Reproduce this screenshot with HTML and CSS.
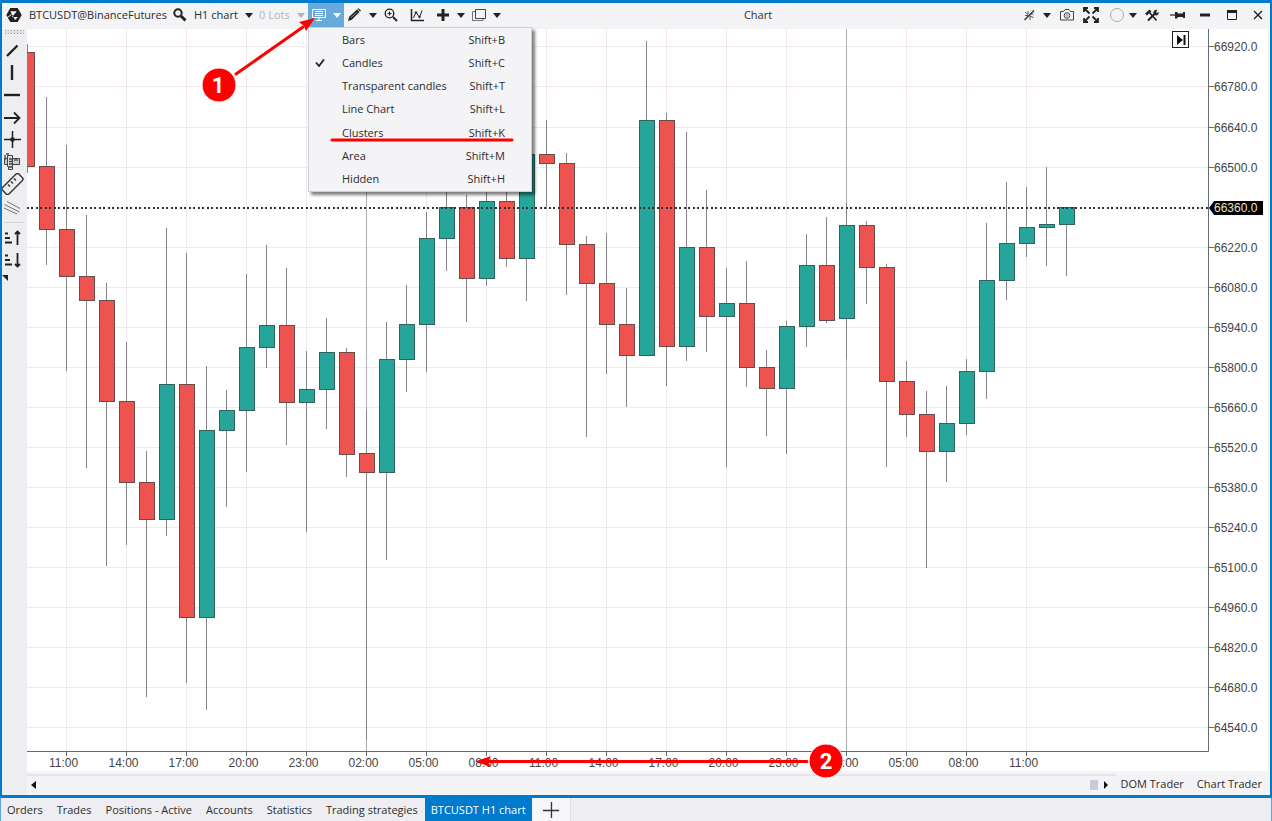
FILE: index.html
```html
<!DOCTYPE html>
<html lang="en">
<head>
<meta charset="utf-8">
<title>BTCUSDT H1 chart</title>
<link rel="stylesheet" href="styles.css">
</head>
<body>
<div class="app">
  <main class="window">
    <header class="toolbar">
      <svg class="logo" viewBox="0 0 16 16" width="16" height="16"><path d="M4.300 1h7.400L15.700 8l-4 7H4.300L.3 8z" fill="#222"/><path d="M4.500 4.500h6L5.800 10H12L9 13z" fill="#f4f4f6"/><path d="M4.500 4.500h6L7 8.500z" fill="#f4f4f6"/><path d="M0 11.500L5.500 7.500" stroke="#f4f4f6" stroke-width="1"/></svg>
      <span class="symbol">BTCUSDT@BinanceFutures</span>
      <button class="tool search" aria-label="Find instrument"><svg viewBox="0 0 14 14" width="14" height="14"><circle cx="5" cy="5" r="3.700" fill="none" stroke="#222" stroke-width="2"/><path d="M8 8l4.500 4.500" stroke="#222" stroke-width="3"/></svg></button>
      <button class="tool interval">H1 chart <i class="caret"></i></button>
      <button class="tool lots" disabled>0 Lots <i class="caret"></i></button>
      <button class="tool pair view" aria-label="Chart view" aria-expanded="true"><svg viewBox="0 0 14 14" width="14" height="14" fill="none" stroke="#fff"><path d="M.5 1.500h13v8H.5zM3 3.500h8M3 5.500h8M3 7.500h8M7 10v2M4 12.500h6"/></svg><i class="caret"></i></button>
      <button class="tool pair" aria-label="Draw"><svg viewBox="0 0 14 14" width="14" height="14"><path d="M0 13l1.200-4.200L9 1.500 11.500 4l-7.700 7.700z" fill="#222"/><path d="M9.500 1l1-.8 2.500 2.300-.9 1z" fill="#222"/><path d="M3 9.500l5.500-5" stroke="#bbb" stroke-width=".8"/></svg><i class="caret"></i></button>
      <button class="tool single" aria-label="Zoom"><svg viewBox="0 0 14 14" width="14" height="14" fill="none" stroke="#222"><circle cx="5.500" cy="5.500" r="4.300" stroke-width="1.300"/><path d="M3.500 5.500h4M5.500 3.500v4" stroke-width="1.200"/><path d="M9 9l4 4" stroke-width="2"/></svg></button>
      <button class="tool single" aria-label="Indicators"><svg viewBox="0 0 14 14" width="14" height="14" fill="none" stroke="#222"><path d="M1.500 1v11.500H14" stroke-width="1.500"/><path d="M3.500 10l2.500-6 3.500 5.500L12 2.500"/><circle cx="6" cy="4.500" r=".8"/><circle cx="9.500" cy="9" r=".8"/></svg></button>
      <button class="tool pair" aria-label="Add"><svg viewBox="0 0 14 14" width="14" height="14"><path d="M7 1v12M1 7h12" stroke="#222" stroke-width="3"/></svg><i class="caret"></i></button>
      <button class="tool pair" aria-label="Windows"><svg viewBox="0 0 14 14" width="14" height="14" fill="none" stroke="#444"><path d="M3.500 1.500h10v9h-10z"/><path d="M3 3.500H.5v9H11V11" stroke="#777"/></svg><i class="caret"></i></button>
      <h1 class="title">Chart</h1>
      <button class="tool pair" aria-label="Link"><svg viewBox="0 0 14 14" width="14" height="14" fill="none" stroke="#333"><path d="M2.500 12L12 2.500" stroke-width="1.500"/><path d="M3 4l3 2.500V3M11.500 9.500L8 8v4M3 7.500h3M8 6h3.500" stroke-width=".8"/></svg><i class="caret"></i></button>
      <button class="tool shot" aria-label="Screenshot"><svg viewBox="0 0 14 14" width="14" height="14" fill="none" stroke="#444"><path d="M.5 3.500h3L5 1.500h4l1.500 2h3v8.500H.5z"/><circle cx="7" cy="7.500" r="2.800"/><circle cx="7" cy="7.500" r="1" stroke="#999"/></svg></button>
      <button class="tool full" aria-label="Full screen"><svg viewBox="0 0 16 16" width="16" height="16" fill="none" stroke="#222" stroke-width="1.800"><path d="M1 5V1h4M11 1h4v4M15 11v4h-4M5 15H1v-4M1 1l5.500 5.500M15 1L9.500 6.500M15 15L9.500 9.500M1 15l5.500-5.500"/></svg></button>
      <button class="tool pair color" aria-label="Colour"><svg viewBox="0 0 14 14" width="14" height="14"><circle cx="7" cy="7" r="6.500" fill="none" stroke="#aaa"/></svg><i class="caret"></i></button>
      <button class="tool setup" aria-label="Settings"><svg viewBox="0 0 14 14" width="14" height="14" fill="none" stroke="#222"><path d="M3 12.500l7-7" stroke-width="2"/><path d="M8.500 4.500A3 3 0 0 1 12 2L10.800 4.200l1 1L13.700 4.500A3 3 0 0 1 10 7z" fill="#222" stroke-width=".5"/><path d="M1 6.500l4.500-4" stroke-width="2.600"/><path d="M4.500 4.500l7 8" stroke-width="1.600"/></svg></button>
      <button class="tool wide" aria-label="Pin"><svg viewBox="0 0 16 14" width="16" height="14"><path d="M0 7h8" stroke="#222" stroke-width="1.200"/><path d="M5 4h2l1 1.500h5V4h2v6h-2V9H8l-1 1.500H5z" fill="#222"/></svg></button>
      <button class="tool wide" aria-label="Minimize"><svg viewBox="0 0 14 14" width="14" height="14"><path d="M2 7h10" stroke="#222" stroke-width="3"/></svg></button>
      <button class="tool wide" aria-label="Maximize"><svg viewBox="0 0 14 14" width="14" height="14"><path d="M2.500 3v8.500h9V3" fill="none" stroke="#222"/><path d="M2 3.500h10" stroke="#222" stroke-width="3"/></svg></button>
      <button class="tool close" aria-label="Close"><svg viewBox="0 0 14 14" width="14" height="14"><path d="M3 3l8 8M11 3l-8 8" stroke="#222" stroke-width="1.400"/></svg></button>
    </header>

    <nav class="drawing" aria-label="Drawing tools">
      <svg class="grip" viewBox="0 0 19 5" width="19" height="5" fill="none" stroke="#999" stroke-dasharray="1 2"><path d="M0 .5h19M0 3.500h19"/><path d="M1.500 2h17"/></svg>
      <button class="draw" aria-label="Line"><svg viewBox="0 0 22 22"><path d="M5 16L15.500 5.500" stroke="#222" stroke-width="2.400"/></svg></button>
      <button class="draw" aria-label="Vertical line"><svg viewBox="0 0 22 22"><path d="M10 3v15" stroke="#222" stroke-width="2.400"/></svg></button>
      <button class="draw" aria-label="Horizontal line"><svg viewBox="0 0 22 22"><path d="M2 11h16" stroke="#222" stroke-width="2.400"/></svg></button>
      <button class="draw" aria-label="Arrow"><svg viewBox="0 0 22 22" fill="none" stroke="#222" stroke-width="1.800"><path d="M2 12h15M12 6.500l5.500 5.500-5.500 5.500"/></svg></button>
      <button class="draw" aria-label="Cross"><svg viewBox="0 0 22 22"><path d="M2 11.500h17M10.500 3v17" stroke="#222" stroke-width="1.500"/><circle cx="10.500" cy="11.500" r="2.300" fill="#222"/></svg></button>
      <button class="draw" aria-label="Caliper"><svg viewBox="0 0 22 22" fill="none" stroke="#444"><path d="M2.500 8.500h15v6h-15z" fill="#ccc"/><path d="M5.500 5.500h5v14h-4v-3h-1z" fill="#ddd"/><path d="M3 5v5M4 4h3M7 9h3M7 11.500h3M7 14h3M7 17h3M13 9v2M15 9v2" stroke-width="1.300"/></svg></button>
      <button class="draw tall" aria-label="Ruler"><svg viewBox="0 0 22 22" fill="none" stroke="#333" stroke-width="1.400"><rect x="-1" y="6.500" width="23" height="9" rx="2" transform="rotate(-45 10.500 11)"/><path d="M6 11.500l2 2M9 8.500l2 2M12 5.500l2 2"/></svg></button>
      <button class="draw tall" aria-label="Channel"><svg viewBox="0 0 22 22" stroke="#777"><path d="M2 11l13 6M2.500 7.500l15 7.500M5 4.500l13 7"/></svg></button>
      <hr class="rule">
      <button class="draw" aria-label="Sort ascending"><svg viewBox="0 0 22 22" fill="none" stroke="#222" stroke-width="2"><path d="M3 6.500h3M3 11h5M3 15.500h7"/><path d="M15.500 18V6M13 7l2.500-2.500L18 7" stroke-width="1.800"/></svg></button>
      <button class="draw" aria-label="Sort descending"><svg viewBox="0 0 22 22" fill="none" stroke="#222" stroke-width="2"><path d="M3 6.500h3M3 11h5M3 15.500h7"/><path d="M15.500 4v12M13 15l2.500 2.500L18 15" stroke-width="1.800"/></svg></button>
      <svg class="more" viewBox="0 0 6 6" width="6" height="6"><path d="M0 0h6v6z" fill="#222"/></svg>
    </nav>

    <section class="chart" aria-label="Candlestick chart">
      <svg id="plot" class="plot"></svg>
      <button class="jump" aria-label="Go to last bar"><svg viewBox="0 0 10 10" width="10" height="10"><path d="M1 0l6 5-6 5z" fill="#111"/><path d="M8.500 0v10" stroke="#111" stroke-width="2"/></svg></button>
    </section>

    <footer class="scroll">
      <div class="track">
        <button class="step" aria-label="Scroll left"><svg viewBox="0 0 6 8" width="6" height="8"><path d="M5 0v8L0 4z" fill="#111"/></svg></button>
        <span class="thumb"></span>
        <button class="step" aria-label="Scroll right"><svg viewBox="0 0 6 8" width="6" height="8"><path d="M1 0v8l4-4z" fill="#111"/></svg></button>
      </div>
      <button class="panel">DOM Trader</button>
      <button class="panel">Chart Trader</button>
    </footer>

    <ul class="menu">
      <li><button class="item"><span class="tick"></span><span>Bars</span><kbd>Shift+B</kbd></button></li>
      <li><button class="item"><span class="tick"><svg viewBox="0 0 10 8" width="10" height="8"><path d="M1 3.500L4 7l5-6.500" fill="none" stroke="#222" stroke-width="1.800"/></svg></span><span>Candles</span><kbd>Shift+C</kbd></button></li>
      <li><button class="item"><span class="tick"></span><span>Transparent candles</span><kbd>Shift+T</kbd></button></li>
      <li><button class="item"><span class="tick"></span><span>Line Chart</span><kbd>Shift+L</kbd></button></li>
      <li><button class="item"><span class="tick"></span><span>Clusters</span><kbd>Shift+K</kbd></button></li>
      <li><button class="item"><span class="tick"></span><span>Area</span><kbd>Shift+M</kbd></button></li>
      <li><button class="item"><span class="tick"></span><span>Hidden</span><kbd>Shift+H</kbd></button></li>
    </ul>
  </main>

  <nav class="tabs" aria-label="Workspaces">
    <button class="tab">Orders</button>
    <button class="tab">Trades</button>
    <button class="tab">Positions - Active</button>
    <button class="tab">Accounts</button>
    <button class="tab">Statistics</button>
    <button class="tab">Trading strategies</button>
    <button class="tab active">BTCUSDT H1 chart</button>
    <button class="tab add" aria-label="Add tab"><svg viewBox="0 0 16 16" width="16" height="16"><path d="M8.500 0v16M0 8.500h16" stroke="#333" stroke-width="1.300"/></svg></button>
  </nav>

  <svg class="notes">
    <g stroke="#f00" stroke-width="3" stroke-linecap="round">
      <path d="M236 74L303 27"/>
      <path d="M332 140H512"/>
      <path d="M807 761.500H486"/>
    </g>
    <path d="M315 18L306 31 304 26 299 22z" fill="#f00"/>
    <path d="M475 761.500L491 756 488 761.500 491 767z" fill="#f00"/>
    <circle class="badge" cx="219" cy="85" r="17"/>
    <circle class="badge" cx="826" cy="761" r="17"/>
    <text class="digit" x="218" y="93">1</text>
    <text class="digit" x="826" y="769">2</text>
  </svg>
</div>
<script src="chart.js"></script>
</body>
</html>
```

FILE: styles.css
```css
* {
  box-sizing: border-box;
}

body {
  margin: 0;
  font: 11px/16px "Open Sans", "Noto Sans", sans-serif;
  color: #2c2c2c;
  background: #eeeef2;
}

button {
  margin: 0;
  padding: 0;
  border: 0;
  background: none;
  color: inherit;
  font: inherit;
  white-space: nowrap;
}

svg {
  display: block;
  flex: none;
}

.app {
  position: relative;
  display: grid;
  grid-template-rows: 1fr auto;
  min-height: 100vh;
}

.window {
  position: relative;
  display: grid;
  grid-template-columns: 25px 1fr;
  grid-template-rows: 26px 1fr 24px;
  border: solid #007acc;
  border-width: 3px 2px;
  background: #f4f4f6;
}

/* Toolbar */
.toolbar {
  grid-column: 1 / -1;
  display: flex;
  align-items: stretch;
  padding-bottom: 2px;
}

.logo {
  align-self: center;
  margin: 0 7px 0 4px;
}

.symbol {
  align-self: center;
  width: 144px;
  white-space: nowrap;
}

.tool {
  display: flex;
  align-items: center;
  justify-content: center;
}

.caret {
  border: solid transparent;
  border-width: 5px 4px 0;
  border-top-color: #222;
}

.search {
  width: 14px;
  margin-right: 7px;
}

.interval {
  width: 65px;
  padding-right: 6px;
  justify-content: space-between;
}

.lots {
  width: 49px;
  padding-right: 3px;
  justify-content: space-between;
  color: #b4b4b8;
}

.lots .caret {
  border-top-color: #b4b4b8;
}

.pair {
  width: 36px;
  padding: 0 3px 0 4px;
  justify-content: space-between;
}

.view {
  background: #68a9dc;
}

.view .caret {
  border-top-color: #fff;
}

.single {
  width: 26px;
  padding-left: 4px;
  justify-content: flex-start;
}

.title {
  flex: 1;
  align-self: center;
  margin: 0;
  padding-right: 6px;
  font: inherit;
  text-align: center;
}

.shot {
  width: 25px;
}

.full {
  width: 24px;
}

.color {
  width: 34px;
  margin-left: 3px;
}

.setup {
  width: 24px;
}

.wide {
  width: 27px;
}

.close {
  width: 25px;
}

/* Drawing tools */
.drawing {
  grid-row: 2 / 4;
  display: flex;
  flex-direction: column;
  background: #eeeef2;
}

.grip {
  margin: 1px 3px 5px;
}

.draw {
  height: 22px;
  width: 25px;
}

.draw svg {
  width: 22px;
  height: 22px;
}

.tall {
  height: 24px;
}

.rule {
  width: 20px;
  margin: 2px 2px 4px;
  border: 0;
  border-top: 1px solid #d4d4da;
}

.more {
  margin-top: 4px;
}

/* Chart */
.chart {
  position: relative;
  margin-right: 2px;
  background: #fff;
}

.plot {
  position: absolute;
  width: 100%;
  height: 100%;
  font: 12px "Liberation Sans", Arial, sans-serif;
}

.grid {
  stroke: #f4e9ea;
}

.session {
  stroke: #adadad;
}

.axis {
  fill: none;
  stroke: #666a73;
}

.label {
  fill: #444;
}

.time {
  text-anchor: middle;
}

.wick {
  stroke: #858585;
}

.body {
  stroke: #6b4a4a;
  fill: #ee5350;
}

.up {
  stroke: #33615d;
  fill: #26a59a;
}

.last {
  stroke: #333;
  stroke-width: 2;
  stroke-dasharray: 2 2 2 3;
}

.last-label {
  fill: #e6e6c8;
}

.jump {
  position: absolute;
  top: 2px;
  right: 79px;
  display: grid;
  place-items: center;
  width: 17px;
  height: 17px;
  border: 1px solid #222;
  background: #fff;
}

/* Scroll bar */
.scroll {
  display: flex;
  align-items: center;
  padding: 2px 8px 0 0;
}

.track {
  flex: 1;
  align-self: stretch;
  display: flex;
  align-items: center;
  gap: 5px;
  margin: 1px 5px 0 0;
  padding: 0 7px 2px 4px;
  border-top: 2px solid #e4e4ea;
}

.thumb {
  width: 8px;
  height: 10px;
  margin-left: auto;
  background: #cbccda;
}

.panel + .panel {
  margin-left: 13px;
}

/* Chart view menu */
.menu {
  position: absolute;
  top: 24px;
  left: 306px;
  display: grid;
  grid-auto-rows: 1fr;
  width: 224px;
  height: 165px;
  margin: 0;
  padding: 0;
  list-style: none;
  border: 1px solid #ccced8;
  background: #f4f4f6;
  box-shadow: 3px 3px 3px rgba(0, 0, 0, 0.5);
}

.item {
  display: grid;
  grid-template-columns: 33px 1fr auto;
  align-items: center;
  width: 100%;
  height: 100%;
  padding-right: 26px;
  text-align: left;
}

.item kbd {
  font: inherit;
}

.tick {
  padding-left: 6px;
}

/* Workspace tabs */
.tabs {
  display: flex;
  height: 23px;
  border: solid #5aa7dd;
  border-width: 0 1px;
}

.tab {
  padding: 0 7px;
}

.tabs .tab:first-child {
  padding-left: 6px;
}

.active {
  padding: 0 6px;
  background: #007acc;
  color: #fff;
}

.add {
  display: grid;
  place-items: center;
  width: 38px;
  margin-left: 1px;
  background: #f7f7f9;
  border-right: 1px solid #dcdce2;
}

/* Annotations */
.notes {
  position: absolute;
  inset: 0;
  width: 100%;
  height: 100%;
  pointer-events: none;
}

.badge {
  fill: #f00;
  stroke: #fff;
  stroke-width: 1;
}

.digit {
  font: bold 22px Roboto, sans-serif;
  fill: #fff;
  text-anchor: middle;
}
```

FILE: chart.js
```js
// Each candle: [high, top of body, bottom of body, low, rising]
const candles = [
  [15, 23, 137, 144, 0], [68, 137, 200, 236, 0], [116, 200, 247, 342, 0], [186, 247, 271, 439, 0],
  [254, 271, 372, 537, 0], [313, 372, 453, 516, 0], [422, 453, 490, 668, 0], [199, 355, 490, 507, 1],
  [224, 355, 588, 654, 0], [337, 401, 588, 681, 1], [361, 381, 401, 478, 1], [245, 318, 381, 443, 1],
  [216, 296, 318, 339, 1], [239, 296, 373, 416, 0], [322, 360, 373, 503, 1], [289, 323, 360, 400, 1],
  [319, 323, 425, 448, 0], [381, 424, 443, 711, 0], [293, 330, 443, 531, 1], [256, 295, 330, 363, 1],
  [183, 209, 295, 343, 1], [161, 178, 209, 242, 1], [166, 178, 249, 293, 0], [161, 172, 249, 257, 1],
  [161, 172, 229, 238, 0], [121, 125, 229, 272, 1], [91, 125, 134, 180, 0], [124, 134, 215, 266, 0],
  [207, 215, 254, 408, 0], [204, 254, 295, 345, 0], [259, 295, 326, 378, 0], [12, 91, 326, 326, 1],
  [84, 91, 317, 357, 0], [103, 218, 317, 332, 1], [161, 218, 287, 323, 0], [239, 274, 287, 438, 1],
  [232, 274, 338, 358, 0], [321, 338, 359, 407, 0], [292, 297, 359, 425, 1], [205, 236, 297, 318, 1],
  [188, 236, 291, 294, 0], [174, 196, 289, 330, 1], [192, 196, 238, 275, 0], [235, 238, 352, 438, 0],
  [332, 352, 385, 408, 0], [362, 385, 422, 539, 0], [357, 394, 422, 453, 1], [330, 342, 394, 406, 1],
  [194, 251, 342, 370, 1], [153, 214, 251, 271, 1], [158, 198, 214, 228, 1], [138, 195, 198, 237, 1],
  [178, 178, 195, 247, 1]
];
const WIDTH = 1241;
const HEIGHT = 742;
const svg = document.getElementById('plot');

function draw() {
  const box = svg.getBoundingClientRect();
  const X = v => Math.round(v * box.width / WIDTH);
  const Y = v => Math.round(v * box.height / HEIGHT);
  const right = box.width - 60;
  const bottom = box.height - 20;
  const line = (c, x1, y1, x2, y2) => `<path class="${c}" d="M${x1} ${y1}L${x2} ${y2}"/>`;
  let out = '';
  let labels = '';

  for (let i = 0; i < 18; i++) {
    const price = 66920 - i * 140;
    const y = Y(17.4 + i * 40.06) + 0.5;
    if (i !== 4) {
      out += line('grid', 0, y, right, y);
      labels += line('axis', right + 1, y, right + 6, y);
      labels += `<text class="label" x="${right + 6}" y="${y + 4}">${price}.0</text>`;
    }
  }
  for (let i = 0; i < 17; i++) {
    const x = X(39 + i * 60) + 0.5;
    const hour = String((11 + i * 3) % 24).padStart(2, '0');
    out += line(i === 5 || i === 13 ? 'session' : 'grid', x, 0, x, bottom);
    labels += line('axis', x, bottom, x, bottom + 5);
    labels += `<text class="label time" x="${x - 3}" y="${bottom + 16}">${hour}:00</text>`;
  }

  const half = Math.round(7.5 * box.width / WIDTH);
  candles.forEach(([high, top, low, bot, up], i) => {
    const x = X(i * 20 - 1) + 0.5;
    out += line('wick', Math.max(x, 0.5), Y(high), Math.max(x, 0.5), Y(bot));
    out += `<rect class="body${up ? ' up' : ''}" x="${x - half + 1}" y="${Y(top) + 0.5}" width="${2 * half - 1}" height="${Math.max(Y(low) - Y(top), 1)}"/>`;
  });

  const last = Y(178) + 1;
  out += line('last', 0, last, right, last);
  out += `<path class="axis" d="M${right + 0.5} 0V${bottom + 0.5}H0"/>` + labels;
  out += `<path d="M${right + 1} ${last}l5 -7h49v14h-49z" fill="#000"/>`;
  out += `<text class="last-label" x="${right + 6}" y="${last + 4}">66360.0</text>`;
  svg.innerHTML = out;
}

draw();
window.addEventListener('resize', draw);
```
